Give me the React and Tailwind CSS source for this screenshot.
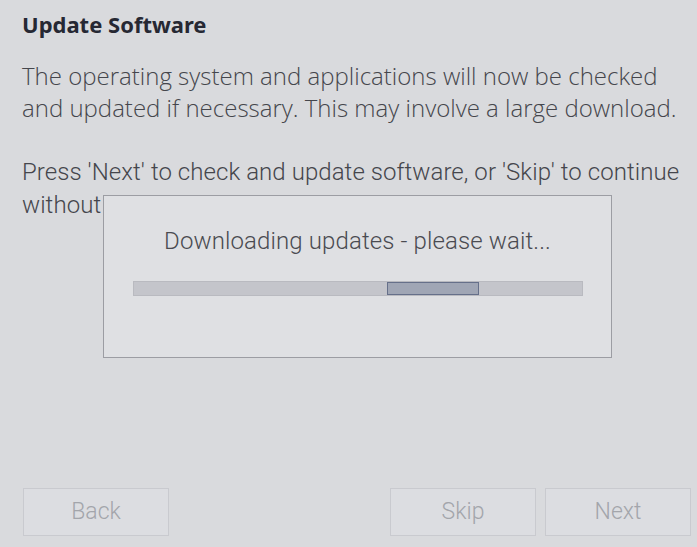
import React from 'react';

const Button = ({ label, className = '' }) => (
    <div
        className={`w-[146px] h-[48px] border border-[#c9cacf] bg-[#dcdde1] flex items-center justify-center text-[23px] font-light text-[#a3a5ab] ${className}`}
        style={{ fontFamily: 'Roboto, sans-serif' }}
    >
        {label}
    </div>
);

export default function App() {
    return (
        <div className="relative w-[697px] h-[547px] bg-[#d9dadd] overflow-hidden flex flex-col">
            <div className="px-[22px] pt-[8px]">
                <h1
                    className="text-[22px] font-bold text-[#262833] leading-[32px]"
                    style={{ fontFamily: '"Noto Sans", sans-serif' }}
                >
                    Update Software
                </h1>
                <p
                    className="mt-[20px] text-[24px] leading-[32px] text-[#45464c] font-light whitespace-nowrap"
                    style={{ fontFamily: '"Open Sans", sans-serif' }}
                >
                    The operating system and applications will now be checked
                    <br />
                    and updated if necessary. This may involve a large download.
                </p>
                <p
                    className="mt-[32px] text-[24px] leading-[33px] text-[#45464c] font-light tracking-[0.0025em] whitespace-nowrap"
                    style={{ fontFamily: 'Roboto, sans-serif' }}
                >
                    Press 'Next' to check and update software, or 'Skip' to continue
                    <br />
                    without updating.
                </p>
            </div>

            <div className="mt-auto mb-[11px] flex pl-[23px] pr-[6px] gap-[9px]">
                <Button label="Back" />
                <div className="flex-1" />
                <Button label="Skip" />
                <Button label="Next" />
            </div>

            <div className="absolute left-[103px] top-[195px] w-[509px] h-[163px] border border-[#9c9da3] bg-[#dfe0e3] flex flex-col items-center">
                <div
                    className="mt-[27px] text-[24px] font-light text-[#4a4b51] tracking-[0.005em]"
                    style={{ fontFamily: 'Roboto, sans-serif' }}
                >
                    Downloading updates - please wait...
                </div>
                <div className="mt-[22px] w-[450px] h-[15px] bg-[#c4c5cb] border border-[#b9bac0] flex">
                    <div className="ml-[253px] w-[92px] h-full bg-[#a0a6b5] border border-[#66708a]" />
                </div>
            </div>
        </div>
    );
}
